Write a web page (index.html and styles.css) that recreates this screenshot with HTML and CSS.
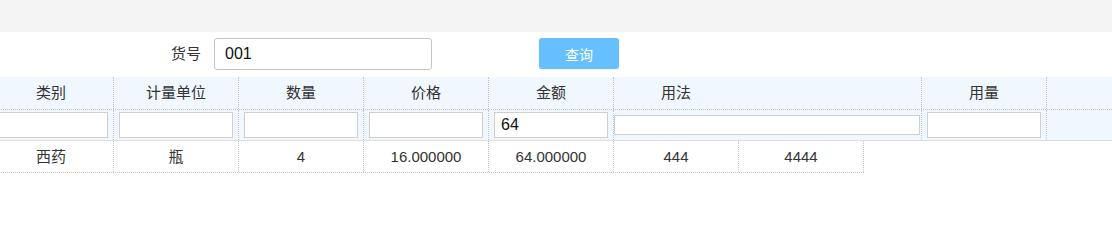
FILE: index.html
```html
<!DOCTYPE html>
<html lang="zh-CN">
<head>
<meta charset="utf-8">
<title>货号查询</title>
<link rel="stylesheet" href="styles.css">
</head>
<body>
<div class="topbar"></div>
<div class="searchbar">
  <label class="search-label" for="code">货号</label>
  <input class="search-input" id="code" type="text" value="001">
  <button class="search-btn" type="button">查询</button>
</div>
<div class="grid">
  <div class="grid-head">
    <div class="hrow">
      <div class="cell">类别</div>
      <div class="cell">计量单位</div>
      <div class="cell">数量</div>
      <div class="cell">价格</div>
      <div class="cell">金额</div>
      <div class="cell wide"><span class="wide-title">用法</span></div>
      <div class="cell">用量</div>
    </div>
    <div class="frow">
      <div class="cell"><input class="filter" type="text"></div>
      <div class="cell"><input class="filter" type="text"></div>
      <div class="cell"><input class="filter" type="text"></div>
      <div class="cell"><input class="filter" type="text"></div>
      <div class="cell"><input class="filter" type="text" value="64"></div>
      <div class="cell wide flat"><input class="filter thin" type="text"></div>
      <div class="cell"><input class="filter" type="text"></div>
    </div>
  </div>
  <div class="brow">
    <div class="cell">西药</div>
    <div class="cell">瓶</div>
    <div class="cell">4</div>
    <div class="cell">16.000000</div>
    <div class="cell">64.000000</div>
    <div class="cell">444</div>
    <div class="cell">4444</div>
  </div>
</div>
</body>
</html>
```
FILE: styles.css
```css
html, body {
  margin: 0;
  padding: 0;
  background: #fff;
  overflow: hidden;
}
body {
  font-family: "Liberation Sans", "Noto Sans CJK SC", sans-serif;
  font-size: 15px;
  color: #333;
}
.topbar {
  height: 32px;
  background: #f4f4f4;
}
.searchbar {
  height: 45px;
  box-sizing: border-box;
  padding-top: 6px;
  display: flex;
  align-items: flex-start;
}
.search-label {
  width: 201px;
  height: 32px;
  line-height: 32px;
  text-align: right;
  margin-right: 13px;
  font-size: 15px;
  color: #333;
}
.search-input {
  width: 218px;
  height: 32px;
  box-sizing: border-box;
  border: 1px solid #c4c4c4;
  border-radius: 3px;
  padding: 0 10px;
  font-family: "Liberation Sans", sans-serif;
  font-size: 16px;
  color: #111;
  outline: none;
}
.search-btn {
  margin-left: 107px;
  width: 80px;
  height: 31px;
  border: none;
  border-radius: 3px;
  background: #66bffe;
  color: #fff;
  font-family: "Noto Sans CJK SC", sans-serif;
  font-size: 14px;
  padding: 0;
}
.grid {
  margin-left: -11px;
}
.grid-head {
  background: #f0f7fe;
  border-bottom: 1px solid #dedede;
  height: 63px;
}
.hrow, .frow, .brow {
  display: flex;
}
.cell {
  width: 125px;
  box-sizing: border-box;
  border-right: 1px dotted #c4c4c4;
  flex: none;
  text-align: center;
}
.wide {
  width: 308px;
  text-align: left;
}
.wide-title {
  display: inline-block;
  width: 124px;
  text-align: center;
}
.hrow {
  height: 33px;
  border-bottom: 1px dotted #c4c4c4;
  box-sizing: border-box;
}
.hrow .cell {
  line-height: 32px;
}
.frow {
  height: 30px;
}
.frow .cell {
  padding: 2px 5px 0;
}
.frow .cell.flat {
  padding: 0;
  display: flex;
  align-items: center;
}
.filter {
  display: block;
  width: 114px;
  height: 26px;
  box-sizing: border-box;
  border: 1px solid #cfcfcf;
  background: #fff;
  padding: 0 6px;
  font-family: "Liberation Sans", sans-serif;
  font-size: 16px;
  color: #111;
  outline: none;
}
.filter.thin {
  width: 306px;
  height: 20px;
}
.brow {
  width: max-content;
  height: 32px;
  border-bottom: 1px dotted #c4c4c4;
  box-sizing: border-box;
}
.brow .cell {
  line-height: 31px;
}
```
